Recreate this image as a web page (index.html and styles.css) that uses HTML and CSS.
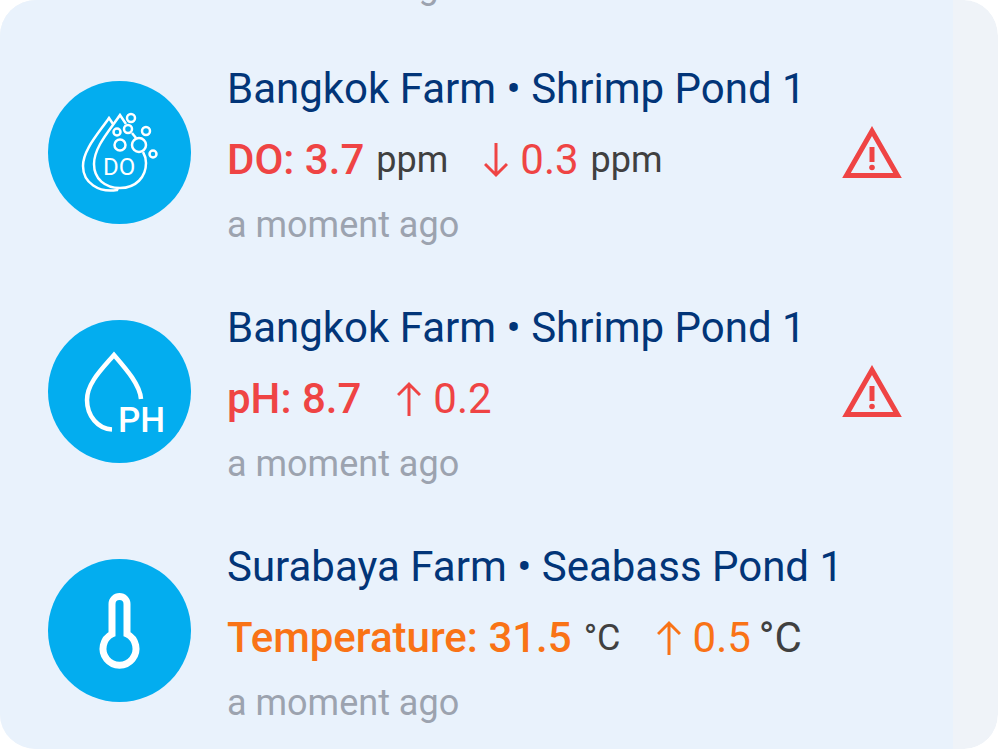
FILE: index.html
```html
<!DOCTYPE html>
<html lang="en">
<head>
	<meta charset="UTF-8">
	<meta name="viewport" content="width=device-width">
	<title>Pond alerts</title>
	<link rel="stylesheet" href="styles.css">
</head>
<body>
	<main class="panel">
		<ul class="alerts">
			<li class="alert">
				<div class="info"><p class="time">a moment ago</p></div>
			</li>
			<li class="alert">
				<svg class="sensor" viewBox="0 0 143 143" aria-hidden="true">
					<circle class="disc" cx="71.5" cy="71.5" r="71.5"/>
					<g class="thin">
						<path d="M78 43 72 34C62 49 46 66 46 83C46 98 57 107 72 107C88 107 98 96 98 82Q98 76 95 71"/>
						<path d="M65 43 61 37C50 53 35 69 35 85C35 102 51 112 69 109L70 107"/>
						<path d="M84 52 88 57"/>
						<circle cx="83" cy="37" r="4"/>
						<circle cx="80" cy="48" r="4"/>
						<circle cx="69" cy="51" r="3.500"/>
						<circle cx="98" cy="50" r="4"/>
						<circle cx="72" cy="64" r="5.500"/>
						<circle cx="91" cy="64" r="7"/>
						<circle cx="105" cy="73" r="3.500"/>
					</g>
					<text class="tag" x="55" y="94">DO</text>
				</svg>
				<div class="info">
					<h2 class="name">Bangkok Farm • Shrimp Pond 1</h2>
					<p class="reading danger">
						<strong>DO: 3.7</strong><span class="unit">ppm</span>
						<svg class="arrow" viewBox="0 0 24 36" role="img" aria-label="down"><path d="M12 1V33M1 22 12 33 23 22"/></svg>
						<span>0.3</span><span class="unit">ppm</span>
					</p>
					<p class="time">a moment ago</p>
				</div>
				<svg class="warning" viewBox="0 0 60 52" role="img" aria-label="Warning"><path class="edge" d="M30 5 55.500 49.500H4.500Z"/><path class="mark" d="M27.500 21h5v15h-5z"/><circle class="mark" cx="30" cy="41.500" r="2.800"/></svg>
			</li>
			<li class="alert">
				<svg class="sensor" viewBox="0 0 143 143" aria-hidden="true">
					<circle class="disc" cx="71.5" cy="71.5" r="71.5"/>
					<path class="drop" d="M93 79C92 65 79 50 66 35C54 49 39 63 39 80C39 96 50 109 64 109.500"/>
					<text class="tag big" x="70" y="112">PH</text>
				</svg>
				<div class="info">
					<h2 class="name">Bangkok Farm • Shrimp Pond 1</h2>
					<p class="reading danger">
						<strong>pH: 8.7</strong>
						<svg class="arrow" viewBox="0 0 24 36" role="img" aria-label="up"><path d="M12 35V3M1 14 12 3 23 14"/></svg>
						<span>0.2</span>
					</p>
					<p class="time">a moment ago</p>
				</div>
				<svg class="warning" viewBox="0 0 60 52" role="img" aria-label="Warning"><path class="edge" d="M30 5 55.500 49.500H4.500Z"/><path class="mark" d="M27.500 21h5v15h-5z"/><circle class="mark" cx="30" cy="41.500" r="2.800"/></svg>
			</li>
			<li class="alert">
				<svg class="sensor" viewBox="0 0 143 143" aria-hidden="true">
					<circle class="disc" cx="71.5" cy="71.5" r="71.5"/>
					<path class="thermo" d="M64 75V45A7.500 7.500 0 0 1 79 45V75A16.500 16.500 0 1 1 64 75Z"/>
				</svg>
				<div class="info">
					<h2 class="name">Surabaya Farm • Seabass Pond 1</h2>
					<p class="reading warm">
						<strong>Temperature: 31.5</strong><span class="unit">°C</span>
						<svg class="arrow" viewBox="0 0 24 36" role="img" aria-label="up"><path d="M12 35V3M1 14 12 3 23 14"/></svg>
						<span>0.5</span><span class="unit large">°C</span>
					</p>
					<p class="time">a moment ago</p>
				</div>
			</li>
		</ul>
	</main>
</body>
</html>
```
FILE: styles.css
```css
* { box-sizing: border-box; }
body { margin: 0; background: #fff; font-family: Roboto, "Liberation Sans", sans-serif; }
h2, p, ul { margin: 0; padding: 0; }
.panel { height: 100vh; border: solid #fff; border-width: 0 2px 1px 0; border-radius: 36px; background: #eff3f8; background-clip: padding-box; overflow: hidden; }

/* newest alerts stay at the bottom, older ones run off the top */
.alerts { display: flex; flex-direction: column; justify-content: flex-end; height: 100%; margin-right: 45px; background: #e9f2fc; list-style: none; }
.alert { display: flex; flex: none; align-items: center; gap: 36px; padding: 16px 53px 17px 48px; }
.alert:first-child { padding-left: 227px; }
.alert:last-child { padding-bottom: 16px; }
.info { flex: 1; padding-top: 4px; white-space: nowrap; }
.name { color: #023578; font-size: 42px; font-weight: 400; line-height: 72px; }
.reading { display: flex; align-items: center; font-size: 42px; line-height: 70px; }
.reading strong { font-weight: 500; }
.danger { color: #ef4444; }
.warm { color: #f97316; }
.unit { margin-left: 12px; color: #404040; font-size: 36px; }
.large { margin-left: 8px; font-size: 42px; }
.time { color: #9ca3af; font-size: 36px; line-height: 60px; }

.sensor { flex: none; width: 143px; height: 143px; fill: none; stroke: #fff; }
.disc { fill: #03adef; stroke: none; }
.thin { stroke-width: 2.5; }
.drop { stroke-width: 4.5; }
.thermo { stroke-width: 7; }
.tag { fill: #fff; stroke: none; font-size: 24px; }
.big { font-size: 35px; font-weight: 500; }
.arrow { flex: none; width: 24px; height: 36px; margin: 0 12px 0 36px; fill: none; stroke: currentColor; stroke-width: 3; }
.warning { flex: none; width: 60px; height: 52px; }
.edge { fill: none; stroke: #ef4444; stroke-width: 5; }
.mark { fill: #ef4444; }
```
